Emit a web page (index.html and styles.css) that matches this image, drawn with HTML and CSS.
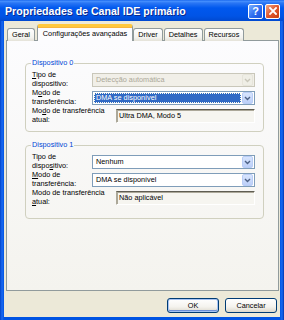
FILE: index.html
```html
<!DOCTYPE html>
<html lang="pt-BR">
<head>
    <meta charset="UTF-8">
    <title>Propriedades de Canal IDE primário</title>
    <link rel="stylesheet" href="styles.css">
</head>
<body>
    <div class="window">
        <div class="titlebar">
            <span class="title">Propriedades de Canal IDE primário</span>
            <div class="caption-buttons">
                <span class="cap-btn help">?</span>
                <span class="cap-btn close">
                    <svg width="8" height="8" viewBox="0 0 8 8"><path d="M1 1L7 7M7 1L1 7" stroke="#fff" stroke-width="1.8" stroke-linecap="square"/></svg>
                </span>
            </div>
        </div>

        <div class="dialog">
            <div class="tabs">
                <span class="tab">Geral</span>
                <span class="tab active">Configurações avançadas</span>
                <span class="tab">Driver</span>
                <span class="tab">Detalhes</span>
                <span class="tab">Recursos</span>
            </div>

            <div class="panel">
                <fieldset class="group">
                    <legend>Dispositivo 0</legend>
                    <div class="row">
                        <span class="label"><u>T</u>ipo de<br>dispositivo:</span>
                        <div class="combo disabled">
                            <span class="value">Detecção automática</span>
                            <span class="drop"><svg width="7" height="5" viewBox="0 0 7 5"><path d="M1 1L3.5 3.5L6 1" fill="none" stroke="#c9c7ba" stroke-width="1.4"/></svg></span>
                        </div>
                    </div>
                    <div class="row">
                        <span class="label">M<u>o</u>do de<br>transferência:</span>
                        <div class="combo">
                            <span class="value selected">DMA se disponível</span>
                            <span class="drop"><svg width="7" height="5" viewBox="0 0 7 5"><path d="M1 1L3.5 3.5L6 1" fill="none" stroke="#4d6185" stroke-width="1.4"/></svg></span>
                        </div>
                    </div>
                    <div class="row wide">
                        <span class="label">Mo<u>d</u>o de transferência<br>atual:</span>
                        <div class="field">Ultra DMA, Modo 5</div>
                    </div>
                </fieldset>

                <fieldset class="group">
                    <legend>Dispositivo 1</legend>
                    <div class="row">
                        <span class="label">Tipo de<br>dispo<u>s</u>itivo:</span>
                        <div class="combo">
                            <span class="value">Nenhum</span>
                            <span class="drop"><svg width="7" height="5" viewBox="0 0 7 5"><path d="M1 1L3.5 3.5L6 1" fill="none" stroke="#4d6185" stroke-width="1.4"/></svg></span>
                        </div>
                    </div>
                    <div class="row">
                        <span class="label"><u>M</u>odo de<br>transferência:</span>
                        <div class="combo">
                            <span class="value">DMA se disponível</span>
                            <span class="drop"><svg width="7" height="5" viewBox="0 0 7 5"><path d="M1 1L3.5 3.5L6 1" fill="none" stroke="#4d6185" stroke-width="1.4"/></svg></span>
                        </div>
                    </div>
                    <div class="row wide">
                        <span class="label">Modo de transferência<br><u>a</u>tual:</span>
                        <div class="field">Não aplicável</div>
                    </div>
                </fieldset>
            </div>

            <div class="footer">
                <button type="button" class="btn default">OK</button>
                <button type="button" class="btn">Cancelar</button>
            </div>
        </div>
    </div>
</body>
</html>
```

FILE: styles.css
```css
* {
    box-sizing: border-box;
    font-family: 'Liberation Sans', Arial, sans-serif;
}

body {
    margin: 0;
    width: 284px;
    height: 320px;
    overflow: hidden;
    font-size: 7.3px;
    color: #000;
}

.window {
    height: 320px;
    display: flex;
    flex-direction: column;
    background: linear-gradient(90deg, #0042c8 0, #1a6af2 2px, #0054e3 4px, #0054e3 280px, #1a6af2 282px, #0036b0 284px);
}

/* Barra de titulo */
.titlebar {
    height: 21px;
    flex: none;
    display: flex;
    align-items: center;
    justify-content: space-between;
    padding: 0 4px 0 5px;
    background: linear-gradient(#0a5ae8 0, #4a93ff 1px, #2a76f5 3px, #0058ee 8px, #0054e6 16px, #0049d0 21px);
}

.title {
    color: #fff;
    font-weight: bold;
    font-size: 10.6px;
    text-shadow: 1px 1px 0 #0b2a8c;
}

.caption-buttons {
    display: flex;
    gap: 2px;
    margin-top: 1px;
}

.cap-btn {
    width: 15px;
    height: 15px;
    border: 1px solid #fff;
    border-radius: 2px;
    display: flex;
    align-items: center;
    justify-content: center;
    color: #fff;
    font-weight: bold;
    font-size: 11px;
}

.help {
    background: linear-gradient(135deg, #7bb0ff, #2d6df0 55%, #1a52d8);
}

.close {
    background: linear-gradient(135deg, #f0a888, #e0582e 50%, #c8400f);
}

/* Corpo do dialogo */
.dialog {
    flex: 1;
    margin: 0 4px 3px 4px;
    padding: 3px 1px 0 2px;
    background-color: #ece9d8;
    display: flex;
    flex-direction: column;
}

.tabs {
    height: 17px;
    flex: none;
    display: flex;
    align-items: flex-end;
    padding-left: 1px;
    margin-bottom: -1px;
    position: relative;
    z-index: 1;
}

.tab {
    height: 13px;
    padding: 0 4px;
    margin-right: 1px;
    border: 1px solid #919b9c;
    border-bottom: none;
    border-radius: 3px 3px 0 0;
    background: linear-gradient(#fff, #f3f3ef 70%, #e4e2d8);
    line-height: 12px;
    white-space: nowrap;
}

.tab.active {
    height: 17px;
    padding: 0 5px;
    margin: 0 0 0 1px;
    border-top: 3px solid #ffc83c;
    box-shadow: inset 0 1px 0 #f7b53d;
    background: #fcfcfe;
    line-height: 13px;
}

.panel {
    flex: 1;
    border: 1px solid #919b9c;
    background: linear-gradient(#fcfcfe, #f4f3ee);
    padding: 17px 14px 0 18px;
}

.group {
    margin: 0;
    min-width: 0;
    border: 1px solid #d0d0bf;
    border-radius: 4px;
    padding: 3px 8px 6px 6px;
}

.group + .group {
    margin-top: 8px;
    padding-bottom: 11px;
}

.group legend {
    padding: 0 1px;
    margin-left: -1px;
    color: #0046d5;
    line-height: 10px;
}

.row {
    height: 18px;
    display: flex;
    align-items: center;
}

.label {
    width: 60px;
    flex: none;
    line-height: 8.6px;
    white-space: nowrap;
}

.row.wide .label {
    width: 84px;
}

.combo {
    flex: 1;
    height: 14px;
    display: flex;
    align-items: center;
    border: 1px solid #7f9db9;
    background-color: #fff;
    padding: 1px;
}

.combo .value {
    flex: 1;
    height: 10px;
    line-height: 10px;
    padding-left: 2px;
    margin-right: 1px;
    white-space: nowrap;
}

.combo .value.selected {
    background-color: #316ac5;
    color: #fff;
    outline: 1px dotted #ffe;
    outline-offset: -1px;
}

.combo .drop {
    width: 11px;
    height: 12px;
    display: flex;
    align-items: center;
    justify-content: center;
    border: 1px solid #b9cdf6;
    border-radius: 2px;
    background: linear-gradient(#d8e5fd, #bccff8);
}

.combo.disabled {
    border-color: #c9c7ba;
    background-color: #f1efe8;
    color: #aca899;
}

.combo.disabled .drop {
    border-color: #e6e4da;
    background: #efeee6;
}

.field {
    flex: 1;
    height: 14px;
    line-height: 12px;
    padding-left: 2px;
    border: 1px solid;
    border-color: #5f5d52 #fff #fff #aca899;
    box-shadow: inset 1px 1px 0 #aca899;
    background-color: #f6f5f0;
    white-space: nowrap;
}

/* Rodape com botoes */
.footer {
    height: 26px;
    flex: none;
    display: flex;
    justify-content: flex-end;
    align-items: flex-start;
    gap: 6px;
    padding: 7px 2px 0 0;
}

.btn {
    width: 52px;
    height: 15px;
    padding: 0;
    border: 1px solid #003c74;
    border-radius: 3px;
    background: linear-gradient(#fff, #f4f3ee 60%, #dcd8cc);
    font-size: 7.3px;
    color: #000;
}

.btn.default {
    box-shadow: inset 0 0 0 1px #a6c3f3, inset 0 -1px 0 1px #6d8fd8;
}
```
